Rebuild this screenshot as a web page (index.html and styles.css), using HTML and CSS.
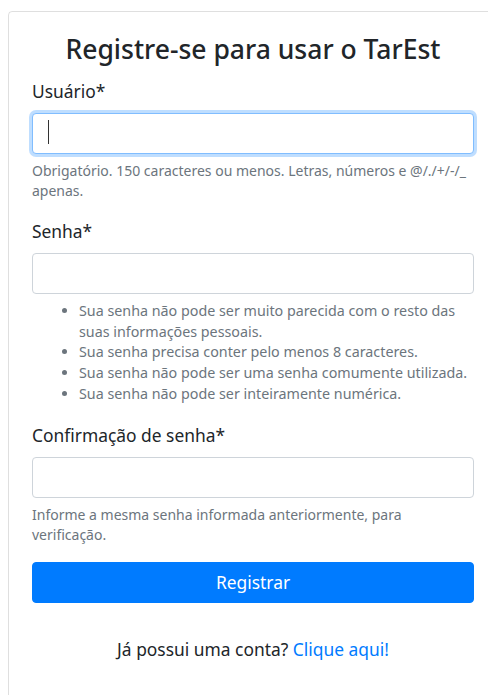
FILE: index.html
```html
<!DOCTYPE html>
<html lang="pt-br">
<head>
<meta charset="utf-8">
<title>Registro - TarEst</title>
<link rel="stylesheet" href="styles.css">
</head>
<body>
<div class="page">
  <div class="card">
    <h3 class="card-title">Registre-se para usar o TarEst</h3>
    <form class="form">
      <div class="field">
        <label class="label" for="id_username">Usuário*</label>
        <div class="input-wrap">
          <input class="control focused" type="text" id="id_username" name="username">
          <span class="caret"></span>
        </div>
        <small class="help">Obrigatório. 150 caracteres ou menos. Letras, números e @/./+/-/_ apenas.</small>
      </div>
      <div class="field">
        <label class="label" for="id_password1">Senha*</label>
        <input class="control" type="password" id="id_password1" name="password1">
        <ul class="help-list">
          <li>Sua senha não pode ser muito parecida com o resto das suas informações pessoais.</li>
          <li>Sua senha precisa conter pelo menos 8 caracteres.</li>
          <li>Sua senha não pode ser uma senha comumente utilizada.</li>
          <li>Sua senha não pode ser inteiramente numérica.</li>
        </ul>
      </div>
      <div class="field">
        <label class="label" for="id_password2">Confirmação de senha*</label>
        <input class="control" type="password" id="id_password2" name="password2">
        <small class="help">Informe a mesma senha informada anteriormente, para verificação.</small>
      </div>
      <button class="btn-primary" type="button">Registrar</button>
    </form>
    <p class="login-hint">Já possui uma conta? <a class="link" href="#">Clique aqui!</a></p>
  </div>
</div>
</body>
</html>
```

FILE: styles.css
```css
html, body {
  margin: 0;
  padding: 0;
  overflow: hidden;
  background: #fff;
}

body {
  font-family: "Noto Sans", "Open Sans", sans-serif;
  color: #212529;
  font-size: 17.4px;
  line-height: 26px;
}

.page {
  padding: 11px 8px 0;
}

.card {
  box-sizing: border-box;
  width: 490px;
  padding: 0 23px 60px;
  border: 1px solid rgba(0, 0, 0, 0.125);
  border-radius: 4px;
}

.card-title {
  margin: 21px 0 13px;
  font-size: 26.5px;
  font-weight: 500;
  line-height: 32px;
  text-align: center;
  color: #212529;
}

.form {
  display: flex;
  flex-direction: column;
}

.field {
  display: flex;
  flex-direction: column;
  margin-bottom: 17px;
}

.label {
  margin-bottom: 9px;
}

.input-wrap {
  position: relative;
}

.control {
  box-sizing: border-box;
  display: block;
  width: 100%;
  height: 41px;
  padding: 6px 12px;
  font: inherit;
  border: 1px solid #ced4da;
  border-radius: 4px;
  background: #fff;
  outline: none;
}

.control.focused {
  border-color: #80bdff;
  box-shadow: 0 0 0 3px rgba(0, 123, 255, 0.25);
}

.caret {
  position: absolute;
  left: 16px;
  top: 7px;
  width: 1px;
  height: 24px;
  background: #333;
}

.help {
  display: block;
  margin-top: 7px;
  font-size: 14px;
  line-height: 20px;
  color: #6c757d;
}

.help-list {
  margin: 7px 0 0;
  padding-left: 47px;
  font-size: 14.3px;
  line-height: 20.7px;
  color: #6c757d;
}

.btn-primary {
  height: 41px;
  font: inherit;
  color: #fff;
  background: #007bff;
  border: 1px solid #007bff;
  border-radius: 4px;
  cursor: pointer;
}

.login-hint {
  margin: 33px 0 0;
  text-align: center;
}

.link {
  color: #007bff;
  text-decoration: none;
}
```
